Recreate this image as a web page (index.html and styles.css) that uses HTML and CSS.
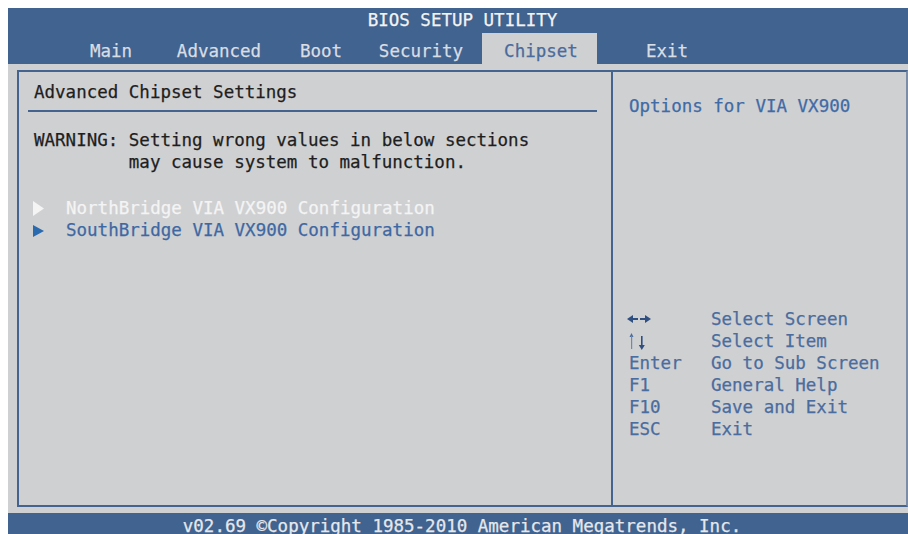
FILE: index.html
```html
<!DOCTYPE html>
<html lang="en">
<head>
<meta charset="utf-8">
<title>BIOS SETUP UTILITY</title>
<link rel="stylesheet" href="styles.css">
</head>
<body>
<div class="screen">
  <header class="topbar">
    <div class="title">BIOS SETUP UTILITY</div>
    <nav class="tabs">
      <span class="tab">Main</span>
      <span class="tab">Advanced</span>
      <span class="tab">Boot</span>
      <span class="tab">Security</span>
      <span class="tab tab-active">Chipset</span>
      <span class="tab">Exit</span>
    </nav>
  </header>

  <main class="frame">
    <section class="content">
      <h1 class="section-title">Advanced Chipset Settings</h1>
      <p class="warning">WARNING: Setting wrong values in below sections
         may cause system to malfunction.</p>
      <ul class="menu">
        <li class="menu-item menu-item-selected">
          <svg class="marker" width="11" height="15" viewBox="0 0 11 15"><polygon points="0,0 11,7.5 0,15" fill="#f4f4f4"/></svg>
          <span>NorthBridge VIA VX900 Configuration</span>
        </li>
        <li class="menu-item">
          <svg class="marker" width="11" height="15" viewBox="0 0 11 15"><polygon points="0,2 11,8 0,14" fill="#2a6bb0"/></svg>
          <span>SouthBridge VIA VX900 Configuration</span>
        </li>
      </ul>
    </section>

    <aside class="help">
      <p class="help-text">Options for VIA VX900</p>
      <dl class="keys">
        <dt class="key-icon">
          <svg class="icon-lr" width="24" height="10" viewBox="0 0 24 10" aria-label="Left/Right">
            <polygon points="0,5 6,1 6,9" fill="#2f4f80"/>
            <rect x="5" y="4" width="6" height="2" fill="#2f4f80"/>
            <rect x="13" y="4" width="6" height="2" fill="#2f4f80"/>
            <polygon points="24,5 18,1 18,9" fill="#2f4f80"/>
          </svg>
        </dt><dd>Select Screen</dd>
        <dt class="key-icon">
          <svg class="icon-ud" width="16" height="17" viewBox="0 0 16 17" aria-label="Up/Down">
            <polygon points="2.5,0 0.5,4 4.5,4" fill="#4a6c9e"/>
            <rect x="2" y="3" width="1.2" height="13" fill="#6f88b0"/>
            <rect x="12" y="3" width="1.6" height="10" fill="#2f4f80"/>
            <polygon points="12.8,17 9.8,12 15.8,12" fill="#2f4f80"/>
          </svg>
        </dt><dd>Select Item</dd>
        <dt>Enter</dt><dd>Go to Sub Screen</dd>
        <dt>F1</dt><dd>General Help</dd>
        <dt>F10</dt><dd>Save and Exit</dd>
        <dt>ESC</dt><dd>Exit</dd>
      </dl>
    </aside>
  </main>

  <footer class="footer">v02.69 ©Copyright 1985-2010 American Megatrends, Inc.</footer>
</div>
</body>
</html>
```

FILE: styles.css
```css
html, body {
  background: #ffffff;
}

body {
  margin: 8px 0 0 8px;
  overflow: hidden;
  font-family: "DejaVu Sans Mono", "Liberation Mono", monospace;
  font-size: 17.5px;
  line-height: 22px;
  -webkit-text-stroke: 0.25px currentColor;
}

.screen {
  width: 900px;
  background: #cfd0d2;
}

/* ---- top bar with title and tabs ---- */
.topbar {
  background: #41638f;
  color: #eef0f3;
}

.title {
  padding: 1px 0 2px 9px;
  text-align: center;
  color: #f3f3f3;
}

.tabs {
  display: grid;
  grid-template-columns: 90px 126px 78px 122px 115px 140px;
  padding-left: 58px;
}

.tab {
  padding: 7px 0 2px;
  text-align: center;
  color: #d9dde4;
}

.tab-active {
  background: #cfd0d2;
  color: #4a6b9b;
  padding-left: 3px;
}

/* ---- main framed area ---- */
.frame {
  display: grid;
  grid-template-columns: 592px 1fr;
  height: 433px;
  margin: 6px 0 0 9px;
  border: 2px solid #44648f;
  border-right-color: #7d8ca6;
}

.content {
  padding-top: 9px;
  color: #1e1e1e;
}

.section-title {
  margin: 0 14px 0 9px;
  padding: 0 0 7px 6px;
  border-bottom: 2px solid #44648f;
  font-size: inherit;
  font-weight: normal;
}

.warning {
  margin: 17px 0 0 15px;
  white-space: pre;
}

.menu {
  list-style: none;
  margin: 24px 0 0 14px;
  padding: 0;
}

.menu-item {
  display: flex;
  align-items: center;
  color: #3e68a3;
}

.menu-item-selected {
  color: #f4f4f4;
}

.marker {
  flex: none;
  margin-right: 22px;
}

/* ---- help column ---- */
.help {
  border-left: 2px solid #44648f;
  padding: 23px 0 0 16px;
  color: #3f6ba6;
}

.help-text {
  margin: 0;
}

.keys {
  display: grid;
  grid-template-columns: 82px 1fr;
  margin: 191px 0 0;
  color: #4a6c9e;
}

.keys dt,
.keys dd {
  margin: 0;
}

.key-icon svg {
  display: block;
}

.icon-lr {
  margin: 6px 0 0 -2px;
}

.icon-ud {
  margin: 3px 0 0 0;
}

/* ---- bottom bar ---- */
.footer {
  margin-top: 6px;
  padding: 2px 0 4px 8px;
  background: #41638f;
  color: #e6e8ec;
  text-align: center;
}
```
